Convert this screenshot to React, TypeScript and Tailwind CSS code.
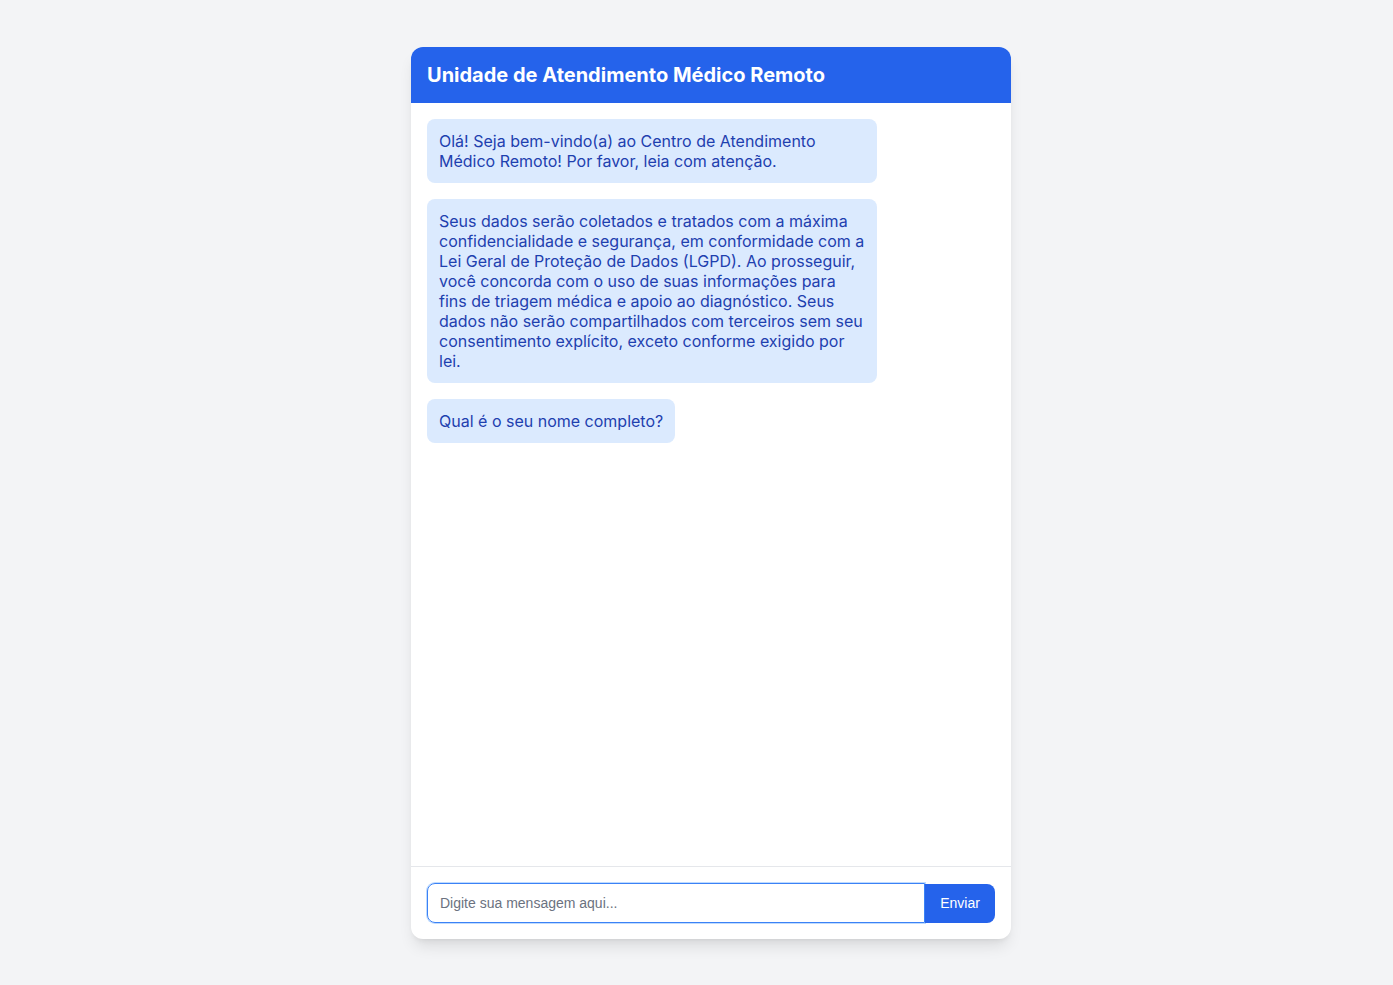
import React, {useState} from "react";

interface iMessage {
	id: number;
	text: string;
}

const initialMessages: iMessage[] = [
	{
		id: 1,
		text: "Olá! Seja bem-vindo(a) ao Centro de Atendimento Médico Remoto! Por favor, leia com atenção.",
	},
	{
		id: 2,
		text: "Seus dados serão coletados e tratados com a máxima confidencialidade e segurança, em conformidade com a Lei Geral de Proteção de Dados (LGPD). Ao prosseguir, você concorda com o uso de suas informações para fins de triagem médica e apoio ao diagnóstico. Seus dados não serão compartilhados com terceiros sem seu consentimento explícito, exceto conforme exigido por lei.",
	},
	{
		id: 3,
		text: "Qual é o seu nome completo?",
	},
];

const App: React.FC = () => {
	const [messages] = useState<iMessage[]>(initialMessages);
	const [input, setInput] = useState("");

	return (
		<div className="min-h-screen bg-[#f3f4f6] flex items-center justify-center pl-[29px] font-['Inter',sans-serif]">
			<div className="w-[600px] h-[892px] bg-white rounded-xl shadow-lg flex flex-col overflow-hidden">
				{/* Header */}
				<div className="bg-[#2563eb] px-4 py-4">
					<h1 className="text-white text-xl font-bold leading-6">
						Unidade de Atendimento Médico Remoto
					</h1>
				</div>

				{/* Messages */}
				<div className="flex-1 overflow-y-auto p-4 flex flex-col gap-4 items-start">
					{messages.map((msg) => (
						<div
							key={msg.id}
							className="max-w-[450px] bg-[#dbeafe] text-[#1e40af] rounded-lg px-3 py-3 text-base leading-5"
						>
							{msg.text}
						</div>
					))}
				</div>

				{/* Input */}
				<div className="border-t border-[#e5e7eb] p-4 flex">
					<input
						autoFocus
						value={input}
						onChange={(e) => setInput(e.target.value)}
						placeholder="Digite sua mensagem aqui..."
						className="flex-1 h-10 px-3 border border-[#3b82f6] ring-1 ring-[#bfdbfe] rounded-l-lg text-sm text-gray-800 placeholder:text-[#6b7280] outline-none font-['Liberation_Sans',Arial,sans-serif]"
					/>
					<button className="w-[70px] h-[39px] mt-px bg-[#2563eb] text-white text-sm rounded-r-lg font-['Liberation_Sans',Arial,sans-serif]">
						Enviar
					</button>
				</div>
			</div>
		</div>
	);
};

export default App;
